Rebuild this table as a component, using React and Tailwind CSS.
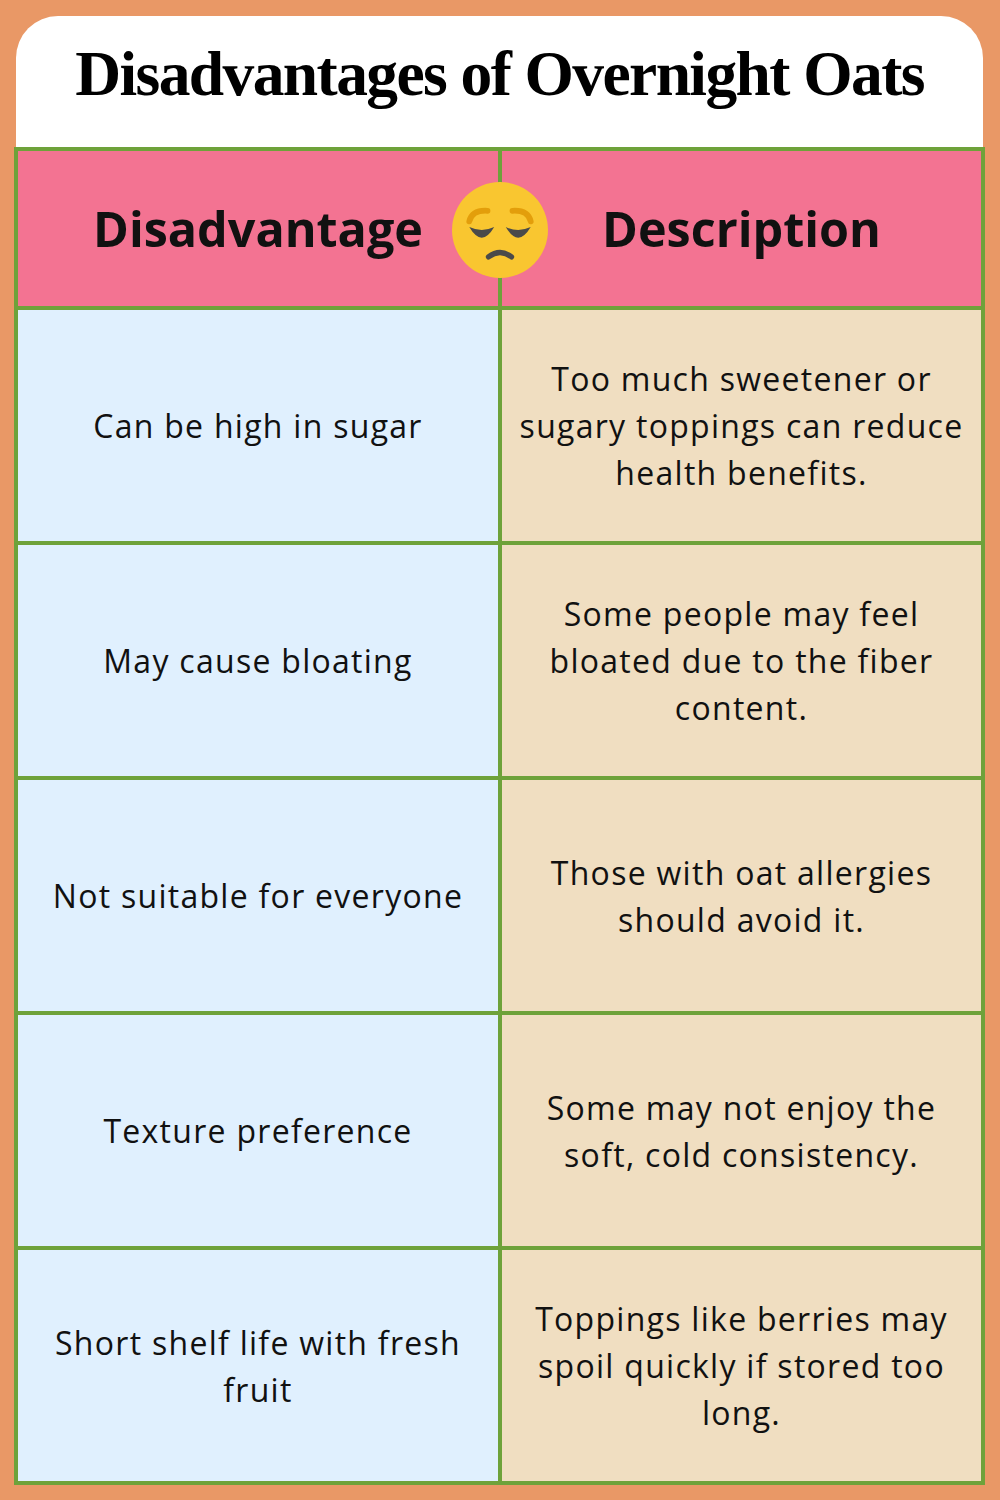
import React from "react";

const rows = [
  {
    name: "Can be high in sugar",
    desc: "Too much sweetener or sugary toppings can reduce health benefits.",
  },
  {
    name: "May cause bloating",
    desc: "Some people may feel bloated due to the fiber content.",
  },
  {
    name: "Not suitable for everyone",
    desc: "Those with oat allergies should avoid it.",
  },
  {
    name: "Texture preference",
    desc: "Some may not enjoy the soft, cold consistency.",
  },
  {
    name: "Short shelf life with fresh fruit",
    desc: "Toppings like berries may spoil quickly if stored too long.",
  },
];

// pensive face emoji, drawn by hand
const PensiveFace = () => (
  <svg viewBox="-50 -50 100 100" className="w-[96px] h-[96px]">
    <circle cx="0" cy="0" r="50" fill="#F9C630" />
    <path d="M -32 -9 Q -29 -21 -13 -20" stroke="#E39E0B" strokeWidth="6" strokeLinecap="round" fill="none" />
    <path d="M 32 -9 Q 29 -21 13 -20" stroke="#E39E0B" strokeWidth="6" strokeLinecap="round" fill="none" />
    <path d="M -32 -3 Q -19 19 -6 -3 Q -19 3 -32 -3 Z" fill="#4A4A4A" />
    <path d="M 32 -3 Q 19 19 6 -3 Q 19 3 32 -3 Z" fill="#4A4A4A" />
    <path d="M -12 28 Q 0 19 12 28" stroke="#4A4A4A" strokeWidth="5.5" strokeLinecap="round" fill="none" />
  </svg>
);

export default function App() {
  return (
    <div className="w-[1000px] h-[1500px] bg-[#E99866] pt-4 pl-4">
      {/* Card */}
      <div className="w-[967px] bg-white rounded-t-[42px]">
        {/* Title */}
        <div className="h-[131px] flex items-center justify-center pb-4">
          <h1 className="font-['Liberation_Serif',serif] font-bold text-[63.5px] text-black leading-none tracking-tight">
            Disadvantages of Overnight Oats
          </h1>
        </div>

        {/* Table */}
        <div className="relative -ml-[2px] w-[971px] border-4 border-[#6EA23A] bg-[#6EA23A] grid grid-cols-[480px_479px] gap-[4px] font-['Open_Sans',sans-serif] text-[#111]">
          <div className="h-[155px] bg-[#F37392] flex items-center justify-center">
            <span className="font-bold text-[48.5px]">Disadvantage</span>
          </div>
          <div className="h-[155px] bg-[#F37392] flex items-center justify-center">
            <span className="font-bold text-[48.5px]">Description</span>
          </div>

          {rows.map((row, i) => (
            <React.Fragment key={i}>
              <div className="h-[231px] bg-[#E0F0FE] flex items-center justify-center px-5 text-center text-[32px] leading-[47px] tracking-[0.04em]">
                {row.name}
              </div>
              <div className="h-[231px] bg-[#F0DEC1] flex items-center justify-center px-4 text-center text-[32px] leading-[47px] tracking-[0.04em]">
                {row.desc}
              </div>
            </React.Fragment>
          ))}

          {/* emoji over the column divider */}
          <div className="absolute left-[434px] top-[31px]">
            <PensiveFace />
          </div>
        </div>
      </div>
    </div>
  );
}
